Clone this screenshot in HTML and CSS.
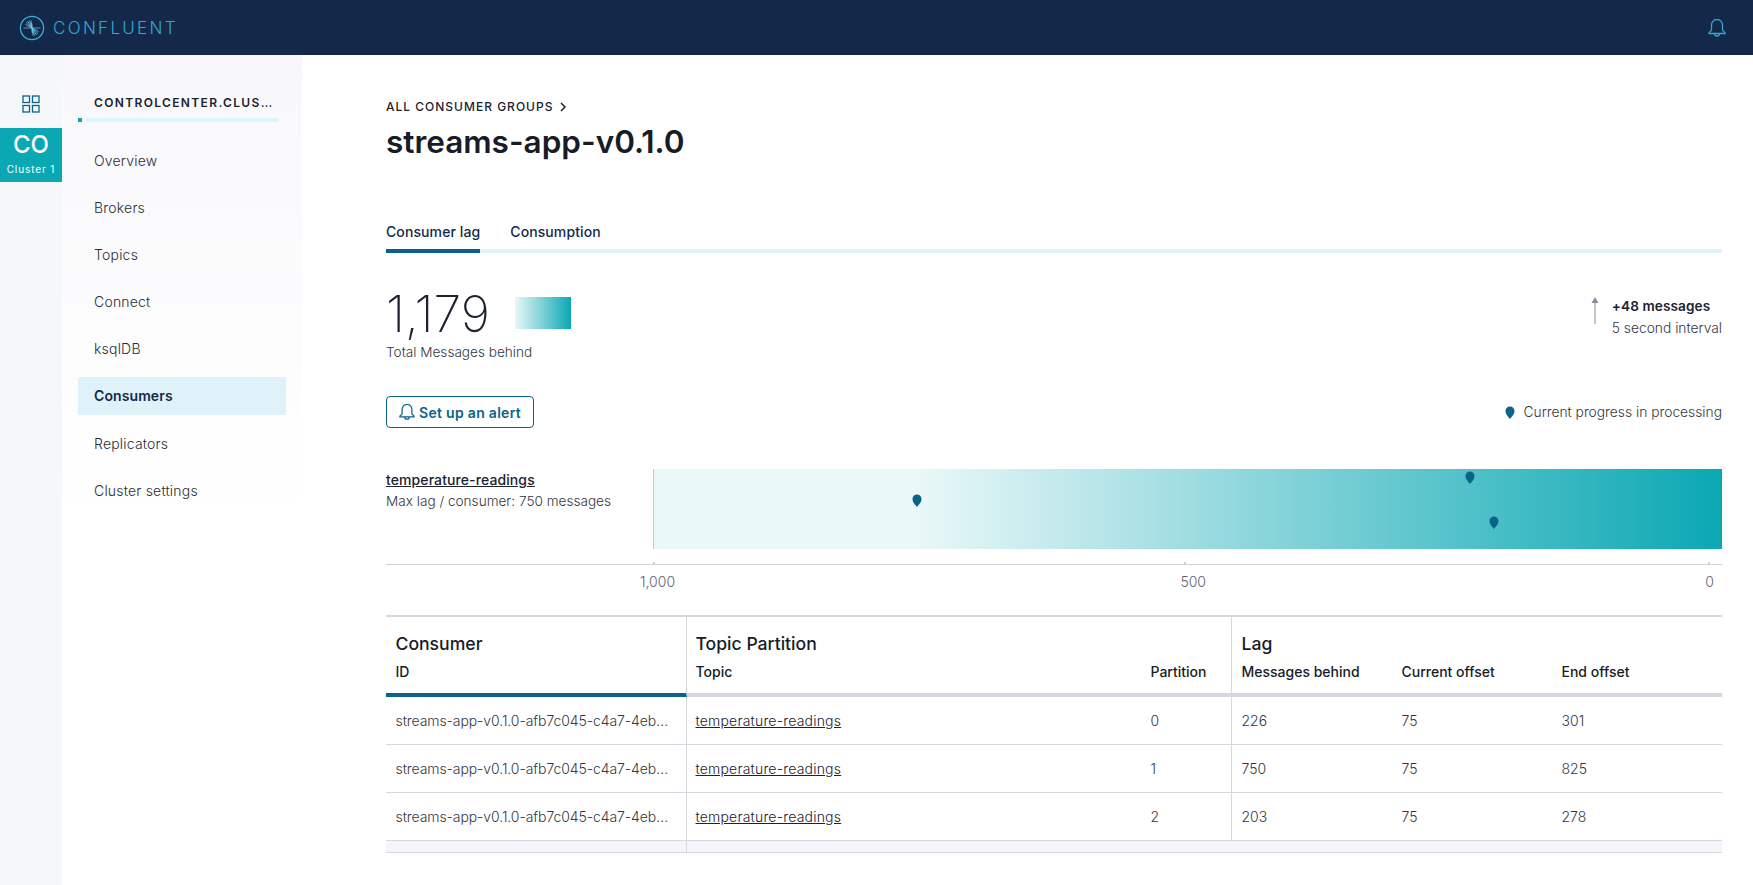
FILE: index.html
```html
<!DOCTYPE html>
<html lang="en">
<head>
    <meta charset="UTF-8">
    <title>streams-app-v0.1.0</title>
    <link rel="stylesheet" href="styles.css">
</head>
<body>
    <header class="topbar">
        <div class="logo">
            <svg class="logo-mark" width="26" height="26" viewBox="0 0 26 26" fill="none" stroke="#38b0dc">
                <circle cx="13" cy="13" r="11.6" stroke-width="1.3"/>
                <path stroke="#6fd0ec" stroke-width=".8" d="M13 13L6.500 9.500M13 13L7 7.500M13 13L8.500 6M13 13L10.500 5.500M13 13L12 5.500M13 13L19.500 16.500M13 13L19 18.500M13 13L17.500 20M13 13L15.500 20.500M13 13L14 20.500"/>
                <path stroke="#6fd0ec" stroke-width=".7" d="M4.500 13H21.500M13 8.500V17.500"/>
            </svg>
            <span class="logo-text">CONFLUENT</span>
        </div>
        <svg class="bell-top" width="18" height="18" viewBox="0 0 18 18" fill="none" stroke="#32a8d4" stroke-width="1.300">
            <path d="M1 14.500h16v-.7c0-1-2.500-1.300-2.500-3V6a5.500 5.500 0 0 0-11 0v4.800c0 1.700-2.500 2-2.500 3z"/>
            <path d="M6.500 14.500a2.500 2.500 0 0 0 5 0"/>
        </svg>
    </header>

    <div class="layout">
        <nav class="rail">
            <svg class="rail-icon" width="18" height="18" viewBox="0 0 18 18" fill="none" stroke="#0a6389" stroke-width="1.300">
                <rect x="1" y="1" width="6.500" height="6.500"/>
                <rect x="10.500" y="1" width="6.500" height="6.500"/>
                <rect x="1" y="10.500" width="6.500" height="6.500"/>
                <rect x="10.500" y="10.500" width="6.500" height="6.500"/>
            </svg>
            <div class="cluster">
                <div class="cluster-code">CO</div>
                <div class="cluster-name">Cluster 1</div>
            </div>
        </nav>

        <aside class="sidebar">
            <div class="side-title">CONTROLCENTER.CLUS…</div>
            <div class="side-rule"><span class="side-dot"></span><span class="side-bar"></span></div>
            <ul class="side-menu">
                <li>Overview</li>
                <li>Brokers</li>
                <li>Topics</li>
                <li>Connect</li>
                <li>ksqlDB</li>
                <li class="active">Consumers</li>
                <li>Replicators</li>
                <li>Cluster settings</li>
            </ul>
        </aside>

        <main class="content">
            <div class="crumb">ALL CONSUMER GROUPS
                <svg width="8" height="10" viewBox="0 0 8 10" fill="none" stroke="#1c2230" stroke-width="1.500"><path d="M2 1l4 4-4 4"/></svg>
            </div>
            <h1 class="title">streams-app-v0.1.0</h1>

            <div class="tabs">
                <div class="tab selected">Consumer lag</div>
                <div class="tab">Consumption</div>
            </div>

            <div class="stats">
                <div>
                    <div class="total-row">
                        <span class="total">1,179</span>
                        <span class="total-swatch"></span>
                    </div>
                    <div class="total-label">Total Messages behind</div>
                </div>
                <div class="rate">
                    <svg class="rate-arrow" width="8" height="27" viewBox="0 0 8 27"><path d="M4 0l3.500 6h-3v21h-1V6h-3z" fill="#8a8a9c"/></svg>
                    <div>
                        <div class="rate-num">+48 messages</div>
                        <div class="rate-sub">5 second interval</div>
                    </div>
                </div>
            </div>

            <div class="actions">
                <button class="alert-btn">
                    <svg width="16" height="16" viewBox="0 0 18 18" fill="none" stroke="#0a6389" stroke-width="1.400">
                        <path d="M1 14.500h16v-.7c0-1-2.500-1.300-2.500-3V6a5.500 5.500 0 0 0-11 0v4.800c0 1.700-2.500 2-2.500 3z"/>
                        <path d="M6.500 14.500a2.500 2.500 0 0 0 5 0"/>
                    </svg>
                    Set up an alert
                </button>
                <div class="legend">
                    <svg class="pin" width="10" height="13" viewBox="0 0 10 13"><path d="M5 13C3.500 10.800 0.500 8.500 0.500 5a4.500 4.500 0 0 1 9 0C9.500 8.500 6.500 10.800 5 13z" fill="#0a6389"/></svg>
                    Current progress in processing
                </div>
            </div>

            <div class="chart-row">
                <div class="chart-info">
                    <div class="chart-topic">temperature-readings</div>
                    <div class="chart-sub">Max lag / consumer: 750 messages</div>
                </div>
                <div class="chart">
                    <svg class="marker" style="left:24.2%;top:25px" width="10" height="13" viewBox="0 0 10 13"><path d="M5 13C3.500 10.800 0.500 8.500 0.500 5a4.500 4.500 0 0 1 9 0C9.500 8.500 6.500 10.800 5 13z"/></svg>
                    <svg class="marker" style="left:75.95%;top:2px" width="10" height="13" viewBox="0 0 10 13"><path d="M5 13C3.500 10.800 0.500 8.500 0.500 5a4.500 4.500 0 0 1 9 0C9.500 8.500 6.500 10.800 5 13z"/></svg>
                    <svg class="marker" style="left:78.2%;top:47px" width="10" height="13" viewBox="0 0 10 13"><path d="M5 13C3.500 10.800 0.500 8.500 0.500 5a4.500 4.500 0 0 1 9 0C9.500 8.500 6.500 10.800 5 13z"/></svg>
                </div>
            </div>
            <div class="ticks"><span></span><span></span><span></span></div>
            <div class="axis-labels"><span>1,000</span><span>500</span><span>0</span></div>

            <table class="lag-table">
                <colgroup>
                    <col class="c-id"><col class="c-topic"><col class="c-part"><col class="c-msg"><col class="c-cur"><col class="c-end">
                </colgroup>
                <thead>
                    <tr class="group-row">
                        <th class="divide">Consumer</th>
                        <th colspan="2" class="divide">Topic Partition</th>
                        <th colspan="3">Lag</th>
                    </tr>
                    <tr class="col-row">
                        <th class="divide sorted">ID</th>
                        <th>Topic</th>
                        <th class="divide">Partition</th>
                        <th>Messages behind</th>
                        <th>Current offset</th>
                        <th>End offset</th>
                    </tr>
                </thead>
                <tbody>
                    <tr>
                        <td class="divide consumer-id">streams-app-v0.1.0-afb7c045-c4a7-4eb…</td>
                        <td><a class="topic-link">temperature-readings</a></td>
                        <td class="divide">0</td>
                        <td>226</td><td>75</td><td>301</td>
                    </tr>
                    <tr>
                        <td class="divide consumer-id">streams-app-v0.1.0-afb7c045-c4a7-4eb…</td>
                        <td><a class="topic-link">temperature-readings</a></td>
                        <td class="divide">1</td>
                        <td>750</td><td>75</td><td>825</td>
                    </tr>
                    <tr>
                        <td class="divide consumer-id">streams-app-v0.1.0-afb7c045-c4a7-4eb…</td>
                        <td><a class="topic-link">temperature-readings</a></td>
                        <td class="divide">2</td>
                        <td>203</td><td>75</td><td>278</td>
                    </tr>
                    <tr class="foot-row">
                        <td class="divide"></td>
                        <td colspan="5"></td>
                    </tr>
                </tbody>
            </table>
        </main>
    </div>
</body>
</html>
```

FILE: styles.css
```css
* {
    box-sizing: border-box;
}

html, body {
    height: 100%;
    margin: 0;
}

body {
    display: flex;
    flex-direction: column;
    overflow: hidden;
    background-color: #ffffff;
    color: #1c2230;
    font-family: "Inter", "Liberation Sans", sans-serif;
    font-size: 14px;
}

.topbar {
    display: flex;
    justify-content: space-between;
    align-items: center;
    flex: 0 0 55px;
    padding: 0 27px 0 19px;
    background-color: #14284a;
}

.logo {
    display: flex;
    align-items: center;
    gap: 8px;
}

.logo-text {
    color: #32a8d4;
    font-size: 17px;
    font-weight: 300;
    letter-spacing: 2.300px;
}

.layout {
    display: flex;
    flex: 1;
    min-height: 0;
}

.rail {
    flex: 0 0 62px;
    padding-top: 40px;
    background-color: #f6f7fa;
    text-align: center;
}

.rail-icon {
    display: block;
    margin: 0 auto 15px;
}

.cluster {
    height: 54px;
    padding-top: 3px;
    background-color: #0aa8b3;
    color: #ffffff;
}

.cluster-code {
    font-size: 24px;
    font-weight: 500;
    line-height: 28px;
}

.cluster-name {
    margin-top: 3px;
    font-size: 10px;
    letter-spacing: .9px;
    line-height: 14px;
}

.sidebar {
    flex: 0 0 240px;
    padding: 40px 16px 0;
    background: linear-gradient(to bottom, #f8f8fb, #ffffff 55%);
}

.side-title {
    padding-left: 16px;
    font-size: 12px;
    font-weight: 600;
    letter-spacing: 1.350px;
    line-height: 15px;
    white-space: nowrap;
}

.side-rule {
    display: flex;
    gap: 4px;
    margin-top: 8px;
}

.side-dot {
    width: 4px;
    height: 4px;
    background-color: #0aa8b3;
}

.side-bar {
    width: 192px;
    height: 4px;
    background-color: #e0f2f9;
}

.side-menu {
    display: flex;
    flex-direction: column;
    gap: 9px;
    margin: 20px 0 0;
    padding: 0;
    list-style: none;
}

.side-menu li {
    width: 208px;
    height: 38px;
    padding-left: 16px;
    color: #2a2e35;
    font-weight: 300;
    letter-spacing: .2px;
    line-height: 38px;
}

.side-menu li.active {
    margin-bottom: 1px;
    background-color: #e0f2f9;
    color: #14284a;
    font-weight: 600;
    letter-spacing: .1px;
}

.content {
    flex: 1;
    min-width: 0;
    padding: 44px 31px 0 84px;
}

.crumb {
    display: flex;
    align-items: center;
    gap: 6px;
    font-size: 12px;
    font-weight: 500;
    letter-spacing: 1px;
    line-height: 15px;
}

.title {
    margin: 8px 0 0;
    color: #171c28;
    font-size: 31.500px;
    font-weight: 600;
    line-height: 40px;
}

.tabs {
    display: flex;
    gap: 30px;
    margin-top: 57px;
    border-bottom: 4px solid #e0f2f9;
}

.tab {
    height: 34px;
    margin-bottom: -4px;
    padding-top: 4px;
    color: #14284a;
    font-weight: 500;
    letter-spacing: .1px;
    line-height: 18px;
}

.tab.selected {
    border-bottom: 4px solid #0a6389;
}

.stats {
    display: flex;
    justify-content: space-between;
    align-items: flex-start;
    margin-top: 37px;
}

.total-row {
    display: flex;
    align-items: center;
    gap: 25px;
}

.total {
    color: #1c2230;
    font-size: 50px;
    font-weight: 200;
    line-height: 48px;
}

.total-swatch {
    width: 56px;
    height: 32px;
    margin-top: -2px;
    background: linear-gradient(to right, #e9f7f8, #0aa8b3);
}

.total-label {
    margin-top: 4px;
    color: #33383f;
    font-size: 13.600px;
    font-weight: 300;
    line-height: 20px;
}

.rate {
    display: flex;
    gap: 13px;
    padding-top: 5px;
}

.rate-arrow {
    margin-top: 2px;
}

.rate-num {
    color: #1c2230;
    font-size: 13.600px;
    font-weight: 600;
    letter-spacing: .1px;
    line-height: 22px;
}

.rate-sub {
    color: #33383f;
    font-size: 13.800px;
    font-weight: 300;
    line-height: 22px;
}

.actions {
    display: flex;
    justify-content: space-between;
    align-items: center;
    margin-top: 34px;
}

.alert-btn {
    display: flex;
    align-items: center;
    gap: 4px;
    height: 32px;
    padding: 0 12px;
    border: 1px solid #0a6389;
    border-radius: 4px;
    background-color: #ffffff;
    color: #0a6389;
    font-family: inherit;
    font-size: 14px;
    font-weight: 600;
    letter-spacing: .3px;
}

.legend {
    display: flex;
    align-items: center;
    gap: 8px;
    color: #33383f;
    font-size: 13.800px;
    font-weight: 300;
}

.chart-row {
    display: flex;
    margin-top: 41px;
}

.chart-info {
    flex: 0 0 267px;
}

.chart-topic {
    padding-top: 1px;
    color: #1c2230;
    font-weight: 500;
    letter-spacing: .1px;
    line-height: 20px;
    text-decoration: underline;
}

.chart-sub {
    margin-top: 1px;
    color: #33383f;
    font-size: 13.600px;
    font-weight: 300;
    line-height: 20px;
}

.chart {
    position: relative;
    flex: 1;
    height: 80px;
    border-left: 1px solid #c9c9cf;
    background: linear-gradient(to right, #e9f7f8 25%, #0aa8b3 100%);
}

.marker {
    position: absolute;
    fill: #0a6389;
}

.ticks {
    display: flex;
    justify-content: space-between;
    height: 16px;
    padding: 13px 12px 0 267px;
    border-bottom: 1px solid #cfcfd4;
}

.ticks span {
    width: 2px;
    height: 2px;
    background-color: #cfcfd4;
}

.ticks span:nth-child(2), .axis-labels span:nth-child(2) {
    margin-left: 6px;
}

.axis-labels {
    display: flex;
    justify-content: space-between;
    height: 50px;
    padding: 8px 8px 0 254px;
    color: #5f5f75;
    font-weight: 300;
    line-height: 17px;
}

.lag-table {
    width: 1336px;
    border-collapse: separate;
    border-spacing: 0;
    border-top: 2px solid #d7d7df;
    table-layout: fixed;
}

.c-id { width: 301px; }
.c-topic { width: 454px; }
.c-part { width: 91px; }
.c-msg { width: 160px; }
.c-cur { width: 160px; }
.c-end { width: 170px; }

.lag-table th, .lag-table td {
    padding: 0 0 0 9.500px;
    text-align: left;
    white-space: nowrap;
    overflow: hidden;
}

.lag-table th:nth-child(2), .lag-table td:nth-child(2) {
    padding-left: 8.500px;
}

.divide {
    border-right: 1px solid #d7d7df;
}

.group-row th {
    height: 41px;
    padding-top: 12px;
    color: #171c28;
    font-size: 17.600px;
    font-weight: 500;
    line-height: 20px;
}

.col-row th {
    height: 39px;
    border-bottom: 4px solid #d7d7df;
    color: #171c28;
    font-size: 14px;
    font-weight: 500;
    padding-bottom: 8px;
}

.col-row th.sorted {
    border-bottom-color: #0a6389;
}

.lag-table td {
    height: 48px;
    border-bottom: 1px solid #d7d7df;
    color: #33383f;
    font-size: 14px;
    font-weight: 300;
}

.lag-table td.consumer-id {
    letter-spacing: -.08px;
}

.lag-table .foot-row td {
    height: 12px;
    background-color: #f5f6f9;
}

.topic-link {
    color: #1c2230;
    letter-spacing: .2px;
    text-decoration: underline;
}
```
